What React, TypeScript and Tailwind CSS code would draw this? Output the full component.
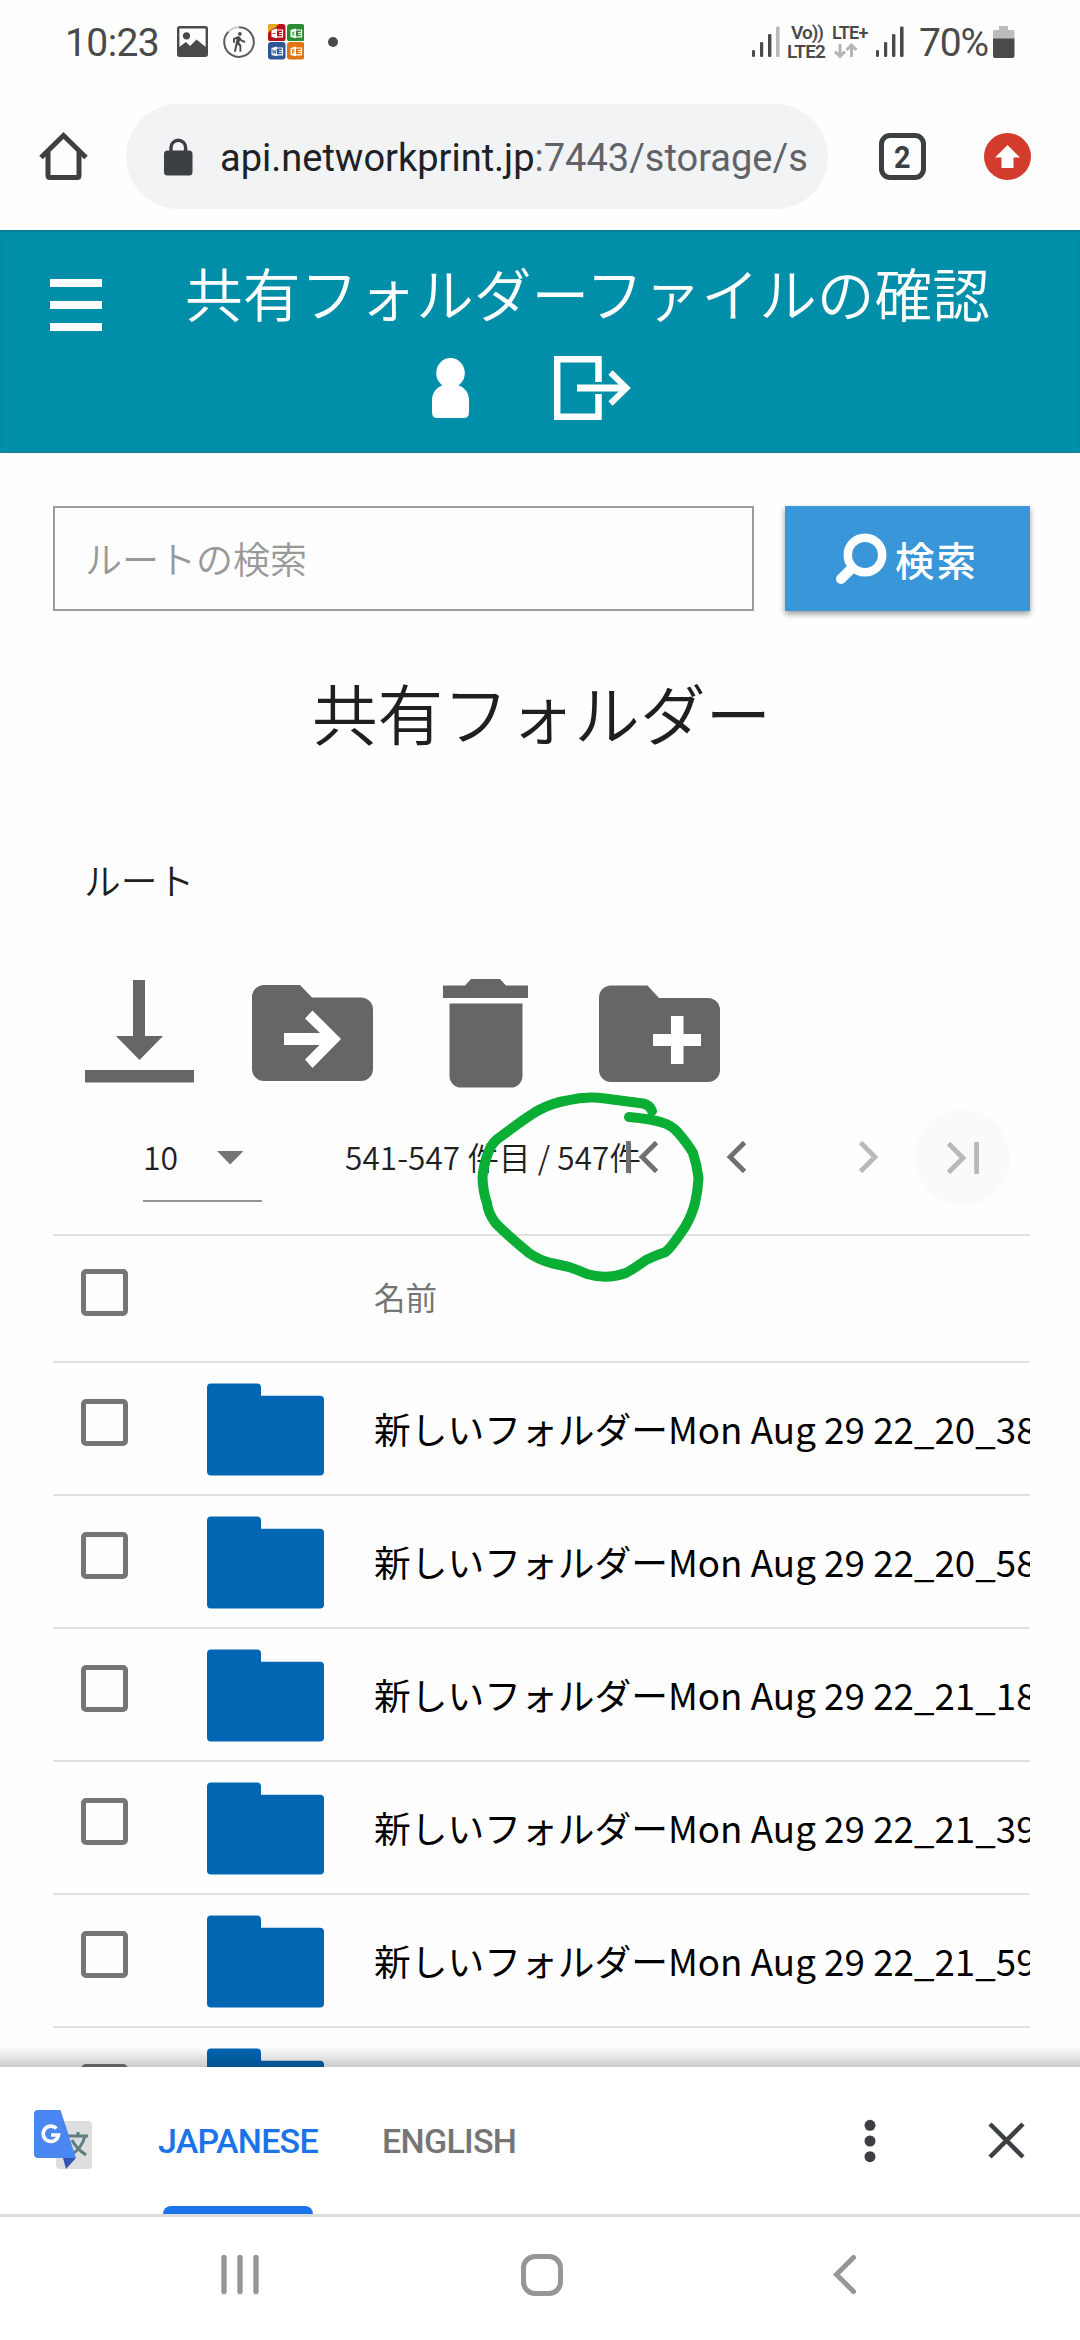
import React from 'react';

const JP = "font-['Noto_Sans_CJK_JP',sans-serif]";

const rows = ['22_20_38', '22_20_58', '22_21_18', '22_21_39', '22_21_59', '22_22_20'];

function SignalBars({ weak }: { weak?: boolean }) {
  return (
    <svg width="28" height="31" viewBox="0 0 28 31" fill="#4a4a4a">
      <rect x="0" y="24" width="3" height="7" rx="1.3" />
      <rect x="8" y="16" width="3.2" height="15" rx="1.3" />
      <rect x="16" y="8" width="3.4" height="23" rx="1.3" />
      <rect x="24" y="0.5" width="3.6" height="30.5" rx="1.3" fill={weak ? '#b9b9b9' : '#4a4a4a'} />
    </svg>
  );
}

function OfficeTile({ color, mark, gold }: { color: string; mark: string; gold?: boolean }) {
  return (
    <svg width="17.5" height="17.5" viewBox="0 0 17.5 17.5">
      <rect width="17.5" height="17.5" rx="3" fill={color} />
      {gold && <path d="M0 9V3a3 3 0 0 1 3-3h8L7 4 4 5z" fill="#e3ab1c" />}
      <path d="M3.500 6 9 4.500v9.800L3.500 13z" fill="#fff" />
      <path d="M9 6h5.500v6.800H9" fill="none" stroke="#fff" strokeWidth="1.200" />
      <path d="M11 8.500h3M11 10.500h3" stroke="#fff" strokeWidth=".9" />
      <path d={mark} fill="none" stroke={color} strokeWidth=".9" />
    </svg>
  );
}

function StatusBar() {
  return (
    <div className="flex h-[83px] items-center pl-[65px] text-[#4a4a4a]">
      <span className="w-[112px] font-[Roboto] text-[39px] leading-none tracking-[-0.6px] pt-[4px]">10:23</span>
      <svg width="31" height="31" viewBox="0 0 31 31">
        <rect x="1.200" y="1.200" width="28.600" height="28.600" rx="1.500" fill="none" stroke="#4a4a4a" strokeWidth="2.400" />
        <circle cx="9.500" cy="9.800" r="3.600" fill="#4a4a4a" />
        <path d="M1.500 21.500 9 16l4 4 6.500-6.500L25 18l5 4v7.500H1.500z" fill="#4a4a4a" />
      </svg>
      <svg className="ml-[15px]" width="32" height="32" viewBox="0 0 32 32">
        <path d="M16 1.200A14.800 14.800 0 1 1 5.500 5.600" fill="none" stroke="#5c5c5c" strokeWidth="2" />
        <path d="M5.500 5.600A14.800 14.800 0 0 1 16 1.200" fill="none" stroke="#cfcfcf" strokeWidth="2" />
        <g transform="translate(4.500 4.700) scale(.92)">
          <path
            fill="#4a4a4a"
            d="M13.500 5.500c1.100 0 2-.9 2-2s-.9-2-2-2-2 .9-2 2 .9 2 2 2zM9.800 8.900L7 23h2.100l1.800-8 2.100 2v6h2v-7.500l-2.100-2 .6-3C14.800 12 16.800 13 19 13v-2c-1.900 0-3.500-1-4.300-2.400l-1-1.600c-.4-.6-1-1-1.700-1-.3 0-.5.1-.8.1L6 8.300V13h2V9.600l1.800-.7"
          />
        </g>
      </svg>
      <div className="ml-[13px] grid grid-cols-2 gap-px">
        <OfficeTile color="#b5101b" mark="M4.500 9.500h3" gold />
        <OfficeTile color="#2c8c33" mark="m5 7.500 2.500 4M7.500 7.500 5 11.500" />
        <OfficeTile color="#2e5597" mark="m4.500 7.500.8 4 1-3 1 3 .8-4" />
        <OfficeTile color="#e0740f" mark="M5.500 12V7.500h1.500v2.500H5.500" />
      </div>
      <span className="ml-[24px] h-[10px] w-[10px] rounded-full bg-[#4a4a4a]" />
      <div className="ml-[414px]">
        <SignalBars weak />
      </div>
      <div className="ml-[7px] flex w-[40px] flex-col font-[Roboto] text-[19px] font-semibold leading-[19px]">
        <span className="pl-[4px] tracking-[-1px]">Vo))</span>
        <span className="tracking-[-0.8px]">LTE2</span>
      </div>
      <div className="ml-[5px] flex w-[37px] flex-col font-[Roboto] text-[18px] font-semibold leading-[18px]">
        <span className="tracking-[-0.8px]">LTE+</span>
        <svg className="ml-[2px] mt-px" width="24" height="16" viewBox="0 0 24 16" fill="none" stroke="#b5b5b5" strokeWidth="3">
          <path d="M6 1v12M1 8.500l5 5 5-5M17.500 14V3M12.500 7l5-5 5 5" />
        </svg>
      </div>
      <div className="ml-[7px]">
        <SignalBars />
      </div>
      <span className="ml-[15px] w-[74px] font-[Roboto] text-[39px] leading-none tracking-[-1.200px] pt-[4px]">70%</span>
      <svg width="22" height="34" viewBox="0 0 22 34">
        <path d="M6 1h9v4h5a1.500 1.500 0 0 1 1.500 1.500V14H0V6.500A1.500 1.500 0 0 1 1.500 5H6z" fill="#bcbcbc" />
        <path d="M0 13.500h21.500V31a2 2 0 0 1-2 2h-17.500a2 2 0 0 1-2-2z" fill="#4a4a4a" />
      </svg>
    </div>
  );
}

function BrowserBar() {
  return (
    <div className="flex h-[147px] items-center pl-[39px]">
      <svg width="49" height="49" viewBox="0 0 49 49" fill="none" stroke="#3c4043" strokeWidth="5">
        <path d="M9 20v23.500q0 2 2 2h27q2 0 2-2V20" />
        <path d="m2 25.500 22.500-22 22.500 22" strokeLinejoin="miter" />
      </svg>
      <div className="ml-[38px] flex h-[105px] w-[702px] items-center overflow-hidden rounded-full bg-[#f1f3f4] pl-[38px]">
        <svg width="29" height="38" viewBox="0 0 29 38">
          <rect x="0" y="12.500" width="28.500" height="25" rx="3.500" fill="#3c4043" />
          <path d="M7 14V9.500a7.300 7.300 0 0 1 14.600 0V14" fill="none" stroke="#3c4043" strokeWidth="3.400" />
        </svg>
        <span className="ml-[27px] whitespace-nowrap font-[Roboto] text-[38px] leading-none text-[#202124] pt-[3px]">
          api.networkprint.jp<span className="text-[#5f6368]">:7443/storage/s</span>
        </span>
      </div>
      <div className="ml-[51px] flex h-[47px] w-[47px] items-center justify-center rounded-[11px] border-[5px] border-[#3c4043] font-['Roboto'] text-[32px] font-bold leading-none text-[#3c4043]">
        <span className="scale-x-90">2</span>
      </div>
      <svg className="ml-[58px]" width="47" height="47" viewBox="0 0 47 47">
        <circle cx="23.500" cy="23.500" r="23.500" fill="#d33b2c" />
        <path d="M23.500 12 36 24.500h-6.500V35h-12V24.500H11z" fill="#fff" />
      </svg>
    </div>
  );
}

function Header() {
  return (
    <header className={`h-[223px] border-b border-[#1a7d8f] bg-[#018ea8] text-white shadow-[inset_0_2px_2px_#087f95] ${JP}`}>
      <div className="flex h-[114px] pl-[50px]">
        <div className="mt-[49px] flex flex-col gap-[14.500px]">
          <span className="h-[7.500px] w-[52px] bg-white" />
          <span className="h-[7.500px] w-[52px] bg-white" />
          <span className="h-[7.500px] w-[52px] bg-white" />
        </div>
        <h1 className="ml-[83px] mt-[20px] whitespace-nowrap text-[57.750px] font-[350] leading-[84px]">共有フォルダーファイルの確認</h1>
      </div>
      <div className="flex items-center pl-[431px] pt-[11px]">
        <svg width="39" height="62" viewBox="0 0 39 62" fill="#fff">
          <ellipse cx="19.500" cy="16" rx="14.300" ry="15" />
          <path d="M19.500 27C33 27 38 36 38 43v12q0 6-5 6H6q-5 0-5-6V43c0-7 5-16 18.500-16z" />
        </svg>
        <svg className="ml-[83px]" width="80" height="66" viewBox="0 0 80 66" fill="none" stroke="#fff" strokeWidth="6.500">
          <path d="M45.500 27V4.200H4.200v57.600h41.300V39" />
          <path d="M24 33h50" strokeWidth="7" />
          <path d="m57.500 17.500 16 15.500-16 15.500" strokeWidth="6" />
        </svg>
      </div>
    </header>
  );
}

function SearchRow() {
  return (
    <div className={`flex h-[105px] ${JP}`}>
      <div className="flex w-[701px] items-center border-2 border-[#9b9b9b] pl-[30px] text-[37px] font-[350] leading-none text-[#999]">ルートの検索</div>
      <div className="ml-[31px] flex w-[245px] items-center bg-[#3896d9] pl-[50px] text-[39.500px] font-medium leading-none tracking-[2px] text-white shadow-[0_3px_6px_rgba(0,0,0,0.4)]">
        <svg width="52" height="52" viewBox="0 0 52 52" fill="none" stroke="#fff">
          <circle cx="30" cy="22" r="17.200" strokeWidth="8.500" />
          <path d="M17 35 6 46" strokeWidth="10" strokeLinecap="round" />
        </svg>
        <span className="ml-[8px] whitespace-nowrap">検索</span>
      </div>
    </div>
  );
}

function Tools() {
  return (
    <div className="flex h-[110px] items-start pl-[32px]">
      <svg width="109" height="104" viewBox="0 0 109 104" fill="#666">
        <path d="M48 1h12v56h18L54.500 81 31 57h17z" />
        <rect x="0" y="91" width="109" height="12.500" />
      </svg>
      <svg className="ml-[58px]" width="121" height="104" viewBox="0 0 121 104">
        <path d="M12 6h36l12 12.500h49a12 12 0 0 1 12 12V90a12 12 0 0 1-12 12H12A12 12 0 0 1 0 90V18A12 12 0 0 1 12 6z" fill="#666" />
        <path d="M32 54h36l-15-14.500 7.500-8L89 60 60.500 89 53 80.500 67.500 66H32z" fill="#fff" />
      </svg>
      <svg className="ml-[70px]" width="85" height="109" viewBox="0 0 85 109" fill="#666">
        <path d="M0 6.500h22L28 0h29l6 6.500h22V19H0z" />
        <path d="M6.500 24.500h73V97a11.500 11.500 0 0 1-11.500 11.500H18A11.500 11.500 0 0 1 6.500 97z" />
      </svg>
      <svg className="ml-[71px]" width="121" height="104" viewBox="0 0 121 104">
        <path d="M12 6.500h36.500L60 19h49a12 12 0 0 1 12 12v60a12 12 0 0 1-12 12H12A12 12 0 0 1 0 91V18.500a12 12 0 0 1 12-12z" fill="#666" />
        <path d="M72 37h12.500v18H102v12H84.500v18H72V67H54V55h18z" fill="#fff" />
      </svg>
    </div>
  );
}

function Chevron({ dir, bar, color }: { dir: 'left' | 'right'; bar?: boolean; color: string }) {
  return (
    <svg width="32" height="32" viewBox="0 0 32 32" fill="none" stroke={color} strokeWidth="4.800">
      {dir === 'left' ? <path d="M30.500 1.500 16 16l14.500 14.500" /> : <path d="M1.500 1.500 16 16 1.500 30.500" />}
      {bar && <path d={dir === 'left' ? 'M2.400 0v32' : 'M29.600 0v32'} />}
    </svg>
  );
}

function Pagination() {
  return (
    <div className={`relative flex h-[147px] items-start border-b-2 border-[#e0e0e0] pl-[90px] ${JP}`}>
      <div className="flex h-[113px] w-[119px] items-center border-b-2 border-[#949494] text-[32px] font-[350] leading-none text-[#1f1f1f]">
        <span className="w-[74px] pt-[22px]">10</span>
        <svg className="mt-[26px]" width="27" height="14" viewBox="0 0 27 14">
          <path d="M0 0h26.500L13.200 13.500z" fill="#757575" />
        </svg>
      </div>
      <span className="ml-[83px] mt-[49px] w-[280px] whitespace-nowrap text-[31.500px] font-[350] leading-[36px] tracking-[0.1px] text-[#1f1f1f]">541-547 件目 / 547件</span>
      <div className="ml-px mt-[52px] flex">
        <Chevron dir="left" bar color="#707070" />
      </div>
      <div className="ml-[56px] mt-[52px]">
        <Chevron dir="left" color="#707070" />
      </div>
      <div className="ml-[113px] mt-[52px]">
        <Chevron dir="right" color="#b9b9b9" />
      </div>
      <div className="ml-[24px] mt-[21px] flex h-[95px] w-[95px] items-center justify-center rounded-full bg-[#fafafa]">
        <Chevron dir="right" bar color="#b9b9b9" />
      </div>
      {/* Hand-drawn marker ring over the item count */}
      <svg className="absolute left-[417px] top-0 z-10" width="240" height="200" viewBox="470 1089 240 200" fill="none" stroke="#0bae34" strokeWidth="10" strokeLinecap="round" strokeLinejoin="round">
        <path d="M652 1111Q650 1105 643 1103.500L605 1098.500Q586 1096 567 1100.500Q552 1103 539 1110Q528 1116 497.500 1139Q492 1143 488 1153Q483 1167 482.500 1178Q483 1192 487 1203Q488 1213 495.500 1223Q506 1234 529 1253Q539 1260 551 1263L569 1267Q578 1270 587 1274Q607 1280 626 1273Q635 1268 646 1260Q654 1256 665.500 1252Q671 1248 685 1227Q692 1215 695 1203Q698 1190 698.500 1178Q697 1165 693 1153Q688 1144 677.500 1132Q671 1125 662 1122.500Q652 1119 629 1117" />
      </svg>
    </div>
  );
}

function Checkbox() {
  return <span className="h-[47px] w-[47px] shrink-0 rounded-[5px] border-[5px] border-[#757575]" />;
}

function FileTable() {
  return (
    <div className={JP}>
      <div className="flex h-[127px] items-start border-b-2 border-[#e0e0e0] pl-[28px] pt-[33px]">
        <Checkbox />
        <span className="ml-[246px] mt-[9px] text-[31.500px] leading-[36px] text-[#757575]">名前</span>
      </div>
      {rows.map((r) => (
        <div key={r} className="flex h-[133px] items-start overflow-hidden border-b-2 border-[#e0e0e0] pl-[28px]">
          <span className="mt-[36px] flex">
            <Checkbox />
          </span>
          <svg className="ml-[79px] mt-[20px] shrink-0" width="117" height="93" viewBox="0 0 117 93">
            <path d="M4 .5h46a4 4 0 0 1 4 4v8.300h59a4 4 0 0 1 4 4V88.500a4 4 0 0 1-4 4H4a4 4 0 0 1-4-4V4.500a4 4 0 0 1 4-4z" fill="#0366b3" />
          </svg>
          <span className="ml-[50px] mt-[43px] whitespace-nowrap text-[36.750px] leading-[44px] text-black">新しいフォルダーMon Aug 29 {r}</span>
        </div>
      ))}
    </div>
  );
}

function TranslateBar() {
  return (
    <div className="relative flex h-[150px] items-center border-b-[3px] border-[#dcdcdc] bg-white pl-[34px] font-[Roboto]">
      <div className="absolute inset-x-0 bottom-full h-[20px] bg-gradient-to-b from-transparent to-black/20" />
      <svg className="-mt-px" width="58" height="60" viewBox="0 0 58 60">
        <rect x="22" y="11" width="36" height="48" rx="4" fill="#dedede" />
        <g stroke="#607d80" strokeWidth="3" fill="none">
          <path d="M34 26h20M44 22v4.500M51 26c-2 8-6 14-14 19M38 30c3 6 8 11 14 15" />
        </g>
        <path d="M29 48h13L32 59z" fill="#3552b5" />
        <path d="M4 0h22.500L42 48H4a4 4 0 0 1-4-4V4a4 4 0 0 1 4-4z" fill="#4b87f3" />
        <path d="M22.500 18.500A7.700 7.700 0 1 0 24.500 25H17" fill="none" stroke="#fff" strokeWidth="3.600" />
      </svg>
      <div className="relative ml-[66px] flex h-full w-[162px] items-center text-[34px] font-medium leading-none tracking-[-0.75px] text-[#1a73e8]">
        JAPANESE
        <span className="absolute bottom-0 left-[5px] h-[8px] w-[150px] rounded-t-[8px] bg-[#1a73e8]" />
      </div>
      <span className="ml-[62px] w-[134px] text-[34px] font-medium leading-none tracking-[-0.7px] text-[#757575]">ENGLISH</span>
      <svg className="ml-[348px]" width="12" height="44" viewBox="0 0 12 44" fill="#3c4043">
        <circle cx="6" cy="6.300" r="5.500" />
        <circle cx="6" cy="22" r="5.500" />
        <circle cx="6" cy="37.700" r="5.500" />
      </svg>
      <svg className="ml-[112px]" width="37" height="37" viewBox="0 0 37 37" stroke="#3c4043" strokeWidth="4.500">
        <path d="m2 2 33 33M35 2 2 35" />
      </svg>
    </div>
  );
}

function NavBar() {
  return (
    <div className="flex h-[123px] items-start bg-white pl-[221px] pt-[37px]">
      <svg width="38" height="41" viewBox="0 0 38 41" stroke="#969696" strokeWidth="5.400" strokeLinecap="round">
        <path d="M3 3.500v34M19 3.500v34M35 3.500v34" />
      </svg>
      <span className="ml-[262px] h-[42px] w-[42px] rounded-[14px] border-[5px] border-[#969696]" />
      <svg className="ml-[270px]" width="24" height="41" viewBox="0 0 24 41" fill="none" stroke="#969696" strokeWidth="5" strokeLinecap="round">
        <path d="M20.500 3.500 3.500 20.500l17 17" />
      </svg>
    </div>
  );
}

export default function App() {
  return (
    <div className="flex h-[2340px] w-[1080px] flex-col overflow-hidden bg-[#fefefe]">
      <StatusBar />
      <BrowserBar />
      <Header />
      <main className="h-[1614px] shrink-0 overflow-hidden pl-[53px] pr-[50px] pt-[53px]">
        <SearchRow />
        <h2 className={`mt-[53px] h-[97px] text-center text-[65.600px] font-[350] leading-[96px] text-[#1f1f1f] ${JP}`}>共有フォルダー</h2>
        <div className={`mt-[98px] h-[40px] pl-[31px] text-[36.750px] font-[350] leading-[40px] text-[#1f1f1f] ${JP}`}>ルート</div>
        <div className="h-[80px]" />
        <Tools />
        <Pagination />
        <FileTable />
      </main>
      <TranslateBar />
      <NavBar />
    </div>
  );
}
